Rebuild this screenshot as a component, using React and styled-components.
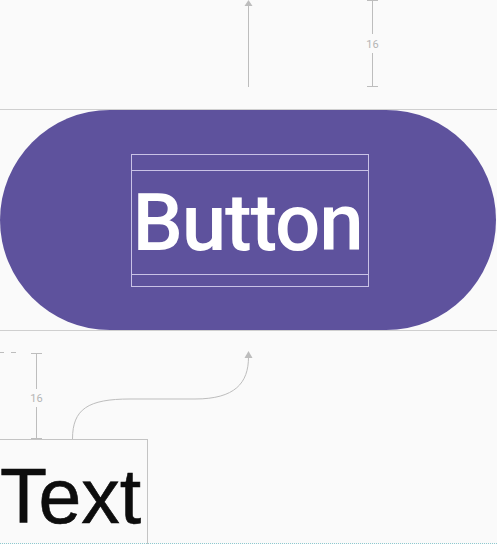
import React from "react";
import styled, { createGlobalStyle } from "styled-components";

const Global = createGlobalStyle`
  html, body { margin: 0; padding: 0; background: #fafafa; }
  body { width: 497px; height: 544px; overflow: hidden; }
`;

const Canvas = styled.div`
  position: relative;
  width: 497px;
  height: 544px;
  background: #fafafa;
  display: flex;
  flex-direction: column;
  overflow: hidden;
`;

const Zone = styled.div`
  height: ${(p) => p.$h}px;
  flex: none;
  border-bottom: ${(p) => (p.$rule ? "1px solid #cfcfcf" : "none")};
  box-sizing: border-box;
`;

const Pill = styled.div`
  flex: none;
  width: 496px;
  height: 220px;
  border-radius: 110px;
  background: #5e529d;
  display: flex;
  align-items: center;
  justify-content: center;
`;

const BoundsBox = styled.div`
  box-sizing: border-box;
  width: 238px;
  height: 133px;
  margin-left: 4px;
  border: 1px solid #c9c2e6;
  display: flex;
  flex-direction: column;
  padding: 15px 0 11px;
`;

const PaddingBox = styled.div`
  flex: 1;
  border-top: 1px solid #c9c2e6;
  border-bottom: 1px solid #c9c2e6;
  display: flex;
  align-items: center;
  justify-content: center;
`;

const ButtonLabel = styled.span`
  font-family: Roboto, "Liberation Sans", sans-serif;
  font-weight: 500;
  font-size: 80px;
  letter-spacing: -1.2px;
  line-height: 1;
  color: #ffffff;
  margin-top: 2px;
  margin-left: -5px;
`;

const Rule = styled.div`
  flex: none;
  height: 1px;
  background: #cfcfcf;
`;

const TextBox = styled.div`
  flex: none;
  box-sizing: border-box;
  width: 148px;
  height: 106px;
  border-top: 1px solid #c4c4c4;
  border-right: 1px solid #c4c4c4;
  font-family: "Liberation Sans", Arial, sans-serif;
  font-size: 77px;
  line-height: 1;
  color: #0d0d0d;
  padding: 18px 0 0 0;
  white-space: nowrap;
  -webkit-text-stroke: 0.6px #0d0d0d;
`;

const DottedEdge = styled.div`
  position: absolute;
  left: 0;
  right: 0;
  bottom: 0;
  height: 1px;
  border-bottom: 1px dotted #8ec9cf;
`;

const Annot = styled.svg`
  display: block;
`;

const G = "#bdbdbd";

function TopAnnotations() {
  return (
    <Annot width="497" height="109" viewBox="0 0 497 109">
      <line x1="248.5" y1="5" x2="248.5" y2="87" stroke={G} strokeWidth="1" />
      <polygon points="248.5,0 244.5,6 252.5,6" fill={G} />
      <line x1="372.5" y1="0" x2="372.5" y2="34" stroke={G} strokeWidth="1" />
      <line x1="372.5" y1="53" x2="372.5" y2="86" stroke={G} strokeWidth="1" />
      <line x1="367" y1="86.5" x2="378" y2="86.5" stroke={G} strokeWidth="1" />
      <line x1="367" y1="0.5" x2="378" y2="0.5" stroke={G} strokeWidth="1" />
      <text x="372.5" y="48" textAnchor="middle" fontFamily="Roboto, sans-serif" fontSize="11" fill="#b5b5b5">16</text>
    </Annot>
  );
}

function BottomAnnotations() {
  return (
    <Annot width="497" height="108" viewBox="0 0 497 108">
      <line x1="0" y1="21.5" x2="4" y2="21.5" stroke={G} strokeWidth="1" />
      <line x1="11" y1="21.5" x2="16" y2="21.5" stroke={G} strokeWidth="1" />
      <line x1="31" y1="22.5" x2="42" y2="22.5" stroke={G} strokeWidth="1" />
      <line x1="36.5" y1="22" x2="36.5" y2="58" stroke={G} strokeWidth="1" />
      <line x1="36.5" y1="76" x2="36.5" y2="108" stroke={G} strokeWidth="1" />
      <line x1="31" y1="107.5" x2="42" y2="107.5" stroke={G} strokeWidth="1" />
      <text x="36.5" y="71" textAnchor="middle" fontFamily="Roboto, sans-serif" fontSize="11" fill="#b5b5b5">16</text>
      <path
        d="M72.5,108 C72.5,78 88,68 130,68 L195,68 C235,68 248.5,52 248.5,26"
        fill="none"
        stroke={G}
        strokeWidth="1"
      />
      <polygon points="248.5,20 244.5,27 252.5,27" fill={G} />
    </Annot>
  );
}

export default function App() {
  return (
    <>
      <Global />
      <Canvas>
        <Zone $h={110} $rule>
          <TopAnnotations />
        </Zone>
        <Pill>
          <BoundsBox>
            <PaddingBox>
              <ButtonLabel>Button</ButtonLabel>
            </PaddingBox>
          </BoundsBox>
        </Pill>
        <Rule />
        <Zone $h={108}>
          <BottomAnnotations />
        </Zone>
        <TextBox>Text</TextBox>
        <DottedEdge />
      </Canvas>
    </>
  );
}
